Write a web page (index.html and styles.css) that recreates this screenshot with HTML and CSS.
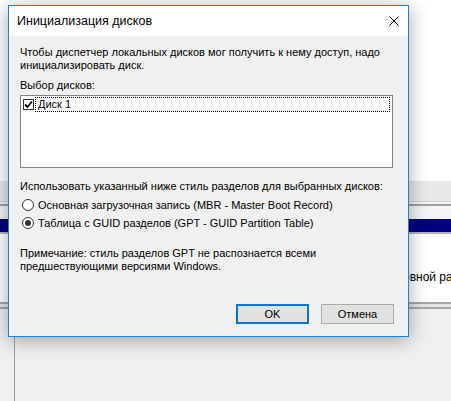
FILE: index.html
```html
<!DOCTYPE html>
<html lang="ru">
<head>
    <meta charset="UTF-8">
    <meta name="viewport" content="width=device-width, initial-scale=1.0">
    <title>Инициализация дисков</title>
    <link rel="stylesheet" href="styles.css">
</head>
<body>
    <!-- Disk management window behind the dialog -->
    <div class="desktop">
        <div class="bg-top"></div>
        <div class="bg-band"></div>
        <div class="bg-rule"></div>
        <div class="bg-gap"></div>
        <div class="bg-navy"></div>
        <div class="bg-rule thin"></div>
        <div class="bg-row"><span class="bg-label">Основной раздел</span></div>
        <div class="bg-rule double"></div>
        <div class="bg-bottom"><div class="bg-col"></div></div>
    </div>

    <div class="dialog">
        <div class="title-bar">
            <span class="title">Инициализация дисков</span>
            <svg class="close" width="10" height="10" viewBox="0 0 10 10">
                <path d="M0.5 0.5 L9.5 9.5 M9.5 0.5 L0.5 9.5" stroke="#000" stroke-width="1" fill="none"/>
            </svg>
        </div>

        <div class="dialog-body">
            <p class="intro">Чтобы диспетчер локальных дисков мог получить к нему доступ, надо инициализировать диск.</p>

            <p class="label">Выбор дисков:</p>
            <div class="listbox">
                <div class="list-item">
                    <span class="checkbox">
                        <svg width="9" height="9" viewBox="0 0 9 9">
                            <path d="M1 4.5 L3.5 7 L8 1.5" stroke="#000" stroke-width="1.8" fill="none"/>
                        </svg>
                    </span>
                    <span class="item-text">Диск 1</span>
                </div>
            </div>

            <p class="label style-label">Использовать указанный ниже стиль разделов для выбранных дисков:</p>
            <div class="radio-row">
                <span class="radio"></span>
                <span>Основная загрузочная запись (MBR - Master Boot Record)</span>
            </div>
            <div class="radio-row">
                <span class="radio checked"></span>
                <span>Таблица с GUID разделов (GPT - GUID Partition Table)</span>
            </div>

            <p class="note">Примечание: стиль разделов GPT не распознается всеми предшествующими версиями Windows.</p>

            <div class="buttons">
                <button class="btn default">OK</button>
                <button class="btn">Отмена</button>
            </div>
        </div>
    </div>
</body>
</html>
```

FILE: styles.css
```css
* {
    margin: 0;
    padding: 0;
    box-sizing: border-box;
}

body {
    width: 451px;
    height: 401px;
    overflow: hidden;
    position: relative;
    background-color: #f0f0f0;
    font-family: "Liberation Sans", Arial, sans-serif;
    font-size: 11px;
    color: #000;
}

/* Window behind the dialog */
.desktop {
    display: flex;
    flex-direction: column;
    height: 100%;
}

.bg-top {
    height: 181px;
    background: #fff;
}

.bg-band {
    height: 20px;
    background: #e8e8e8;
}

.bg-rule {
    height: 5px;
    border-top: 1px solid #d0d0d0;
    border-bottom: 2px solid #a0a0a0;
    background: #f4f4f4;
}

.bg-rule.thin {
    height: 2px;
    border-top: none;
    border-bottom: 2px solid #b4b4b4;
}

.bg-rule.double {
    height: 7px;
    border-top: 2px solid #a8a8a8;
    border-bottom: 2px solid #a8a8a8;
    background: #e6e6e6;
}

.bg-gap {
    height: 13px;
    background: #f4f4f4;
}

.bg-navy {
    height: 13px;
    background: #000080;
}

.bg-row {
    height: 68px;
    background: #fff;
    padding-top: 36px;
    padding-left: 381px;
    font-size: 12px;
    white-space: nowrap;
}

.bg-bottom {
    flex: 1;
    background: #f0f0f0;
    padding-left: 14px;
}

.bg-col {
    width: 1px;
    height: 100%;
    background: #a0a0a0;
}

/* Dialog window */
.dialog {
    position: absolute;
    left: 8px;
    top: 5px;
    width: 401px;
    height: 332px;
    border: 1px solid #1883d7;
    background: #f0f0f0;
    box-shadow: 0 3px 18px rgba(0, 0, 0, 0.35);
    display: flex;
    flex-direction: column;
}

.title-bar {
    height: 30px;
    background: #fff;
    display: flex;
    align-items: center;
    justify-content: space-between;
    padding: 0 9px 0 8px;
}

.title {
    font-size: 12.5px;
}

.close {
    display: block;
}

.dialog-body {
    flex: 1;
    display: flex;
    flex-direction: column;
    padding: 10px 15px 12px 11px;
    line-height: 13px;
}

.label {
    margin-top: 7px;
}

.listbox {
    margin-top: 3px;
    height: 73px;
    background: #fff;
    border: 1px solid #828282;
    padding: 1px 2px 0 2px;
}

.list-item {
    display: flex;
    align-items: center;
    height: 15px;
}

.checkbox {
    width: 11px;
    height: 11px;
    border: 1px solid #333;
    background: #fff;
    display: flex;
    align-items: center;
    justify-content: center;
}

.item-text {
    flex: 1;
    margin-left: 1px;
    height: 15px;
    line-height: 13px;
    padding-left: 2px;
    border: 1px dotted #000;
}

.style-label {
    margin-top: 12px;
}

.radio-row {
    display: flex;
    align-items: center;
    gap: 4px;
    height: 18px;
    line-height: 18px;
    padding-left: 2px;
}

.style-label + .radio-row {
    margin-top: 3px;
}

.radio {
    width: 12px;
    height: 12px;
    border: 1px solid #333;
    border-radius: 50%;
    background: #fff;
    display: flex;
    align-items: center;
    justify-content: center;
}

.radio.checked::after {
    content: "";
    width: 6px;
    height: 6px;
    border-radius: 50%;
    background: #333;
}

.note {
    margin-top: 15px;
    width: 300px;
}

.buttons {
    margin-top: auto;
    display: flex;
    justify-content: flex-end;
    gap: 12px;
    margin-right: -1px;
}

.btn {
    width: 73px;
    height: 20px;
    font-family: "Liberation Sans", Arial, sans-serif;
    font-size: 11px;
    background: #e1e1e1;
    border: 1px solid #adadad;
    color: #000;
}

.btn.default {
    border: 2px solid #0078d7;
}
```
